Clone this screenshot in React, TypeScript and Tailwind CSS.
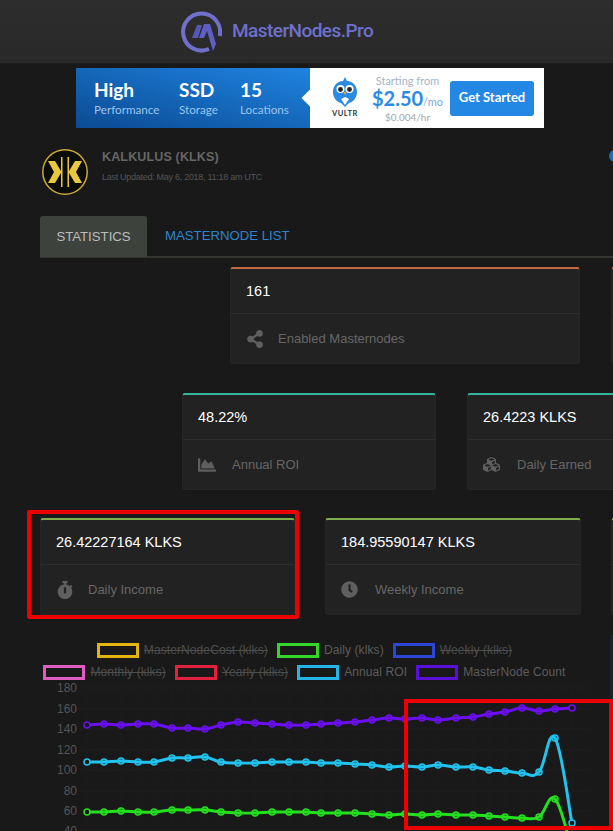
import React from 'react';
import { FaShareAlt, FaChartArea, FaCubes, FaStopwatch, FaClock } from 'react-icons/fa';

const SANS = "font-['Liberation_Sans',Arial,sans-serif]";

interface StatCardProps {
  value: string;
  label: string;
  icon: React.ReactNode;
  accent: string;
  width: string;
  labelGap: string;
}

// top border colour and widths come in as full class names
const StatCard: React.FC<StatCardProps> = ({ value, label, icon, accent, width, labelGap }) => (
  <div className={`${width} h-[97px] shrink-0 rounded-[3px] border-x border-b border-[#262626] border-t-2 ${accent} bg-[#222222]`}>
    <div className="flex h-[45px] items-center border-b border-[#2e2e2e] pt-[1px] pl-[15px] text-[14.5px] text-white">{value}</div>
    <div className={`flex h-[49px] items-center pl-[15px] ${labelGap} text-[13px] text-[#666666]`}>
      <span className="text-[#5f5f5f]">{icon}</span>
      <span>{label}</span>
    </div>
  </div>
);

interface Series {
  color: string;
  ys: number[];
}

const XS = [87, 104, 121, 138, 154, 172, 188, 205, 221, 238, 255, 272, 289, 306, 321, 338, 355, 372, 389, 405, 422, 438, 456, 473, 489, 505, 522, 539, 555, 572];

const SERIES: Series[] = [
  { color: '#25e01f', ys: [812, 812, 811, 812, 812, 810, 810, 810, 812, 813, 813, 812, 812, 812, 813, 813, 813, 814, 815, 814, 815, 814, 815, 815, 816, 817, 818, 817, 799, 850] },
  { color: '#22c3ee', ys: [762, 762, 761, 762, 762, 758, 758, 757, 762, 763, 763, 762, 762, 762, 763, 763, 764, 765, 767, 766, 767, 765, 767, 767, 770, 771, 773, 772, 738, 823] },
  { color: '#6a10f0', ys: [725, 724, 725, 724, 724, 728, 728, 729, 725, 722, 723, 724, 725, 725, 724, 723, 722, 720, 718, 719, 718, 720, 718, 717, 714, 712, 708, 711, 709, 708] },
];

// same smoothing idea as chart.js tension 0.4
const smoothPath = (xs: number[], ys: number[]) => {
  let d = `M${xs[0]} ${ys[0]}`;
  for (let i = 0; i < xs.length - 1; i++) {
    const p0 = i > 0 ? i - 1 : i;
    const p3 = i + 2 < xs.length ? i + 2 : i + 1;
    const c1x = xs[i] + (xs[i + 1] - xs[p0]) * 0.2;
    const c1y = ys[i] + (ys[i + 1] - ys[p0]) * 0.2;
    const c2x = xs[i + 1] - (xs[p3] - xs[i]) * 0.2;
    const c2y = ys[i + 1] - (ys[p3] - ys[i]) * 0.2;
    d += ` C${c1x} ${c1y} ${c2x} ${c2y} ${xs[i + 1]} ${ys[i + 1]}`;
  }
  return d;
};

const LegendItem: React.FC<{ border: string; label: string; off?: boolean }> = ({ border, label, off }) => (
  <div className="flex items-center gap-[5px]">
    <span className={`h-[15px] w-[42px] border-[3px] ${border}`} />
    <span className={off ? 'text-[#4d4d4d] line-through' : 'text-[#5c5c5c]'}>{label}</span>
  </div>
);

const Chart: React.FC = () => {
  const labels = [
    ['180', 692],
    ['160', 713],
    ['140', 733],
    ['120', 754],
    ['100', 774],
    ['80', 795],
    ['60', 815],
    ['40', 835],
  ] as const;
  return (
    <svg width="613" height="148" viewBox="0 683 613 148" className="block">
      {labels.map(([text, y]) => (
        <g key={text}>
          <line x1="80" x2="590" y1={y - 4} y2={y - 4} stroke="#1f1f1f" />
          <text x="77" y={y} textAnchor="end" fontSize="12" fill="#555555" fontFamily="Liberation Sans, Arial, sans-serif">
            {text}
          </text>
        </g>
      ))}
      {XS.map((x) => (
        <line key={x} x1={x} x2={x} y1="688" y2="831" stroke="#1d1d1d" />
      ))}
      {SERIES.map((s) => (
        <g key={s.color}>
          <path d={smoothPath(XS, s.ys)} fill="none" stroke={s.color} strokeWidth="3" />
          {XS.map((x, i) => (
            <circle key={x} cx={x} cy={s.ys[i]} r="3" fill={i === 0 || i === XS.length - 1 ? '#191919' : s.color} fillOpacity={i === 0 || i === XS.length - 1 ? 1 : 0.3} stroke={s.color} strokeWidth="1.5" />
          ))}
        </g>
      ))}
    </svg>
  );
};

const Logo: React.FC = () => (
  <svg width="41" height="42" viewBox="0 0 41 42" className="shrink-0">
    <path d="M28 38 A18.5 18.5 0 1 1 38.7 25" fill="none" stroke="#6f70cb" strokeWidth="4" />
    <path d="M11 27 L16 14 H21 L17 27 Z" fill="#5557b8" />
    <path d="M18 27 L23 13 H29 L35 33 L32 40 L26 20 L23 27 Z" fill="#5d5fc2" />
  </svg>
);

const CoinLogo: React.FC = () => (
  <svg width="46" height="46" viewBox="0 0 46 46" className="shrink-0">
    <circle cx="23" cy="23" r="22.2" fill="#0b0b08" stroke="#c9ac38" strokeWidth="1.5" />
    <path d="M6 12 H13 L19.5 23 L13 34 H6 L12 23 Z" fill="#e9c83f" />
    <path d="M40 12 H33 L26.5 23 L33 34 H40 L34 23 Z" fill="#e9c83f" />
    <path d="M19 8 H20.5 V38 H19 Z M25.5 8 H27 V38 H25.5 Z" fill="#e9c83f" />
  </svg>
);

const VultrBird: React.FC = () => (
  <svg width="26" height="30" viewBox="0 0 26 30">
    <path d="M13 0 L15 4 C21 4 25 9 25 15 C25 21 21 25 17 26 L13 30 L9 26 C5 25 1 21 1 15 C1 9 5 4 11 4 Z" fill="#2b8be4" />
    <circle cx="8.5" cy="12" r="4" fill="#fff" />
    <circle cx="17.5" cy="12" r="4" fill="#fff" />
    <circle cx="8.5" cy="12.5" r="2.4" fill="#222" />
    <circle cx="17.5" cy="12.5" r="2.4" fill="#222" />
    <path d="M11.5 15 H14.5 L13 18 Z" fill="#f0a030" />
    <path d="M9 22 L13 28 L17 22 L13 20 Z" fill="#fff" />
  </svg>
);

const BannerStat: React.FC<{ big: string; small: string; width: string }> = ({ big, small, width }) => (
  <div className={`${width} flex flex-col`}>
    <span className="text-[19px] leading-[22px] font-bold text-white">{big}</span>
    <span className="text-[11.7px] leading-[17px] text-[#9cc4ee]">{small}</span>
  </div>
);

const Banner: React.FC = () => (
  <div className="ml-[76px] flex h-[60px] w-[468px] font-['Lato',sans-serif]">
    <div className="flex w-[234px] items-center bg-gradient-to-tr from-[#0b4b93] to-[#1f84e2] pl-[18px]">
      <BannerStat big="High" small="Performance" width="w-[85px]" />
      <BannerStat big="SSD" small="Storage" width="w-[61px]" />
      <BannerStat big="15" small="Locations" width="w-[66px]" />
    </div>
    <div className="relative flex w-[234px] items-center bg-white pl-[21px]">
      <span className="absolute top-[24px] -left-[6px] h-[12px] w-[12px] rotate-45 bg-white" />
      <div className="flex w-[28px] flex-col items-center">
        <VultrBird />
        <span className="mt-[1px] text-[7.5px] font-bold tracking-[0.5px] text-[#333]">VULTR</span>
      </div>
      <div className="ml-[13px] flex w-[71px] flex-col items-center">
        <span className="text-[11px] leading-[14px] text-[#a3b3c7]">Starting from</span>
        <span className="text-[20px] leading-[20px] font-bold whitespace-nowrap text-[#2b8be4]">
          $2.50<span className="text-[11px] font-normal text-[#7fa9d8]">/mo</span>
        </span>
        <span className="text-[10px] leading-[11px] text-[#a8a8a8]">$0.004/hr</span>
      </div>
      <button className="ml-[7px] flex h-[35px] w-[84px] items-center justify-center rounded-[3px] bg-[#2388e4] text-[13px] font-bold whitespace-nowrap text-white">
        Get Started
      </button>
    </div>
  </div>
);

export default function App() {
  return (
    <div className={`relative h-[831px] w-[613px] overflow-hidden bg-[#191919] ${SANS}`}>
      <header className="flex h-[63px] items-center gap-[10px] bg-gradient-to-b from-[#2d2d2d] to-[#292929] pl-[181px]">
        <Logo />
        <span className="font-['Roboto',sans-serif] text-[19px] font-medium tracking-[-0.55px] text-[#6f70cb]">MasterNodes.Pro</span>
      </header>

      <div className="pt-[5px]">
        <Banner />
      </div>

      <div className="relative mt-[21px] flex h-[46px] items-start gap-[14px] pl-[42px]">
        <CoinLogo />
        <div className="pt-[1px]">
          <div className="text-[12.5px] leading-[15px] font-bold tracking-[0.15px] text-[#666666]">KALKULUS (KLKS)</div>
          <div className="mt-[6px] text-[9px] leading-[12px] tracking-[-0.28px] text-[#555555]">Last Updated: May 6, 2018, 11:18 am UTC</div>
        </div>
        <span className="absolute top-[1px] left-[609px] h-[12px] w-[12px] rounded-full bg-[#1f6fa8]" />
      </div>

      <nav className="mt-[21px] ml-[40px] flex h-[42px] border-b-2 border-[#333531] text-[13.2px]">
        <span className="flex h-[41px] w-[107px] items-center justify-center rounded-t-[3px] bg-[#3e423c] text-[#bcbcbc]">STATISTICS</span>
        <span className="ml-[18px] flex h-[40px] items-center text-[#2b85cc]">MASTERNODE LIST</span>
      </nav>

      <div className="mt-[9px] flex gap-[31px] pl-[230px]">
        <StatCard value="161" label="Enabled Masternodes" icon={<FaShareAlt size={18} />} accent="border-t-[#c56a45]" width="w-[350px]" labelGap="gap-[14px]" />
        <StatCard value="" label="" icon={null} accent="border-t-[#c56a45]" width="w-[350px]" labelGap="gap-[16px]" />
      </div>

      <div className="mt-[29px] flex gap-[31px] pl-[182px]">
        <StatCard value="48.22%" label="Annual ROI" icon={<FaChartArea size={18} />} accent="border-t-[#35b39a]" width="w-[254px]" labelGap="gap-[16px]" />
        <StatCard value="26.4223 KLKS" label="Daily Earned" icon={<FaCubes size={17} />} accent="border-t-[#35b39a]" width="w-[254px]" labelGap="gap-[17px]" />
      </div>

      <div className="mt-[28px] flex gap-[30px] pl-[40px]">
        <StatCard value="26.42227164 KLKS" label="Daily Income" icon={<FaStopwatch size={18} />} accent="border-t-[#7fae4a]" width="w-[255px]" labelGap="gap-[14px]" />
        <StatCard value="184.95590147 KLKS" label="Weekly Income" icon={<FaClock size={17} />} accent="border-t-[#7fae4a]" width="w-[256px]" labelGap="gap-[17px]" />
        <StatCard value="" label="" icon={null} accent="border-t-[#7fae4a]" width="w-[255px]" labelGap="gap-[16px]" />
      </div>

      <div className="mt-[24px] flex h-[22px] w-[609px] items-center justify-center gap-[9px] text-[12px] tracking-[0.1px]">
        <LegendItem border="border-[#e3b30f]" label="MasterNodeCost (klks)" off />
        <LegendItem border="border-[#35d62a]" label="Daily (klks)" />
        <LegendItem border="border-[#2b47d8]" label="Weekly (klks)" off />
      </div>
      <div className="flex h-[22px] w-[609px] items-center justify-center gap-[9px] text-[12px] tracking-[0.1px]">
        <LegendItem border="border-[#e05cc0]" label="Monthly (klks)" off />
        <LegendItem border="border-[#e0213f]" label="Yearly (klks)" off />
        <LegendItem border="border-[#22b5e6]" label="Annual ROI" />
        <LegendItem border="border-[#5a10d8]" label="MasterNode Count" />
      </div>
      <Chart />

      {/* sliver of the next widget, cut off by the window edge */}
      <div className="absolute top-[635px] left-[610px] h-[64px] w-[3px] bg-[#13242c]" />

      {/* red highlight boxes drawn over the screenshot */}
      <div className="absolute top-[510px] left-[27px] h-[109px] w-[272px] rounded-[2px] border-4 border-[#ee0000]" />
      <div className="absolute top-[699px] left-[404px] h-[131px] w-[209px] border-4 border-[#ee0000]" />
    </div>
  );
}
